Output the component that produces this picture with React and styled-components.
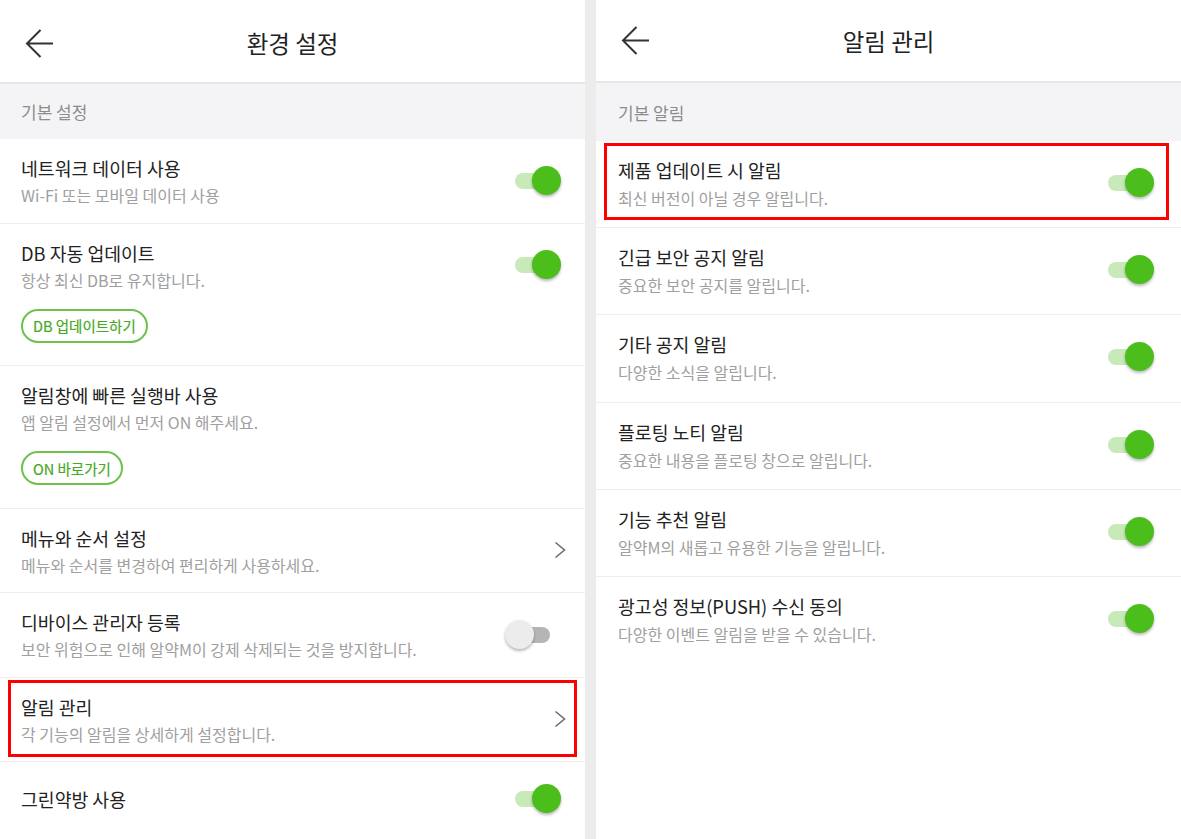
import React from "react";
import styled, { createGlobalStyle, css } from "styled-components";

const GlobalStyle = createGlobalStyle`
  *, *::before, *::after { box-sizing: border-box; }
  html, body { margin: 0; padding: 0; }
  body {
    background: #ececec;
    font-family: "Noto Sans CJK KR", "Noto Sans", sans-serif;
    overflow: hidden;
  }
`;

const Page = styled.div`
  display: flex;
  gap: 11px;
  width: 1181px;
  height: 839px;
  background: #ececec;
`;

const Panel = styled.section`
  width: 585px;
  height: 100%;
  background: #fff;
  display: flex;
  flex-direction: column;
  overflow: hidden;
`;

const Header = styled.header`
  flex: none;
  height: ${(p) => p.$h}px;
  padding-top: ${(p) => p.$pt}px;
  border-bottom: 2px solid #e7e7e7;
  display: grid;
  grid-template-columns: 90px 1fr 90px;
  align-items: center;
`;

const BackButton = styled.button`
  justify-self: start;
  border: 0;
  background: none;
  padding: 0 0 0 25px;
  display: flex;
  align-items: center;
  color: #333;
  cursor: pointer;
`;

const HeaderTitle = styled.h1`
  margin: 0;
  text-align: center;
  font-size: 23.5px;
  font-weight: 400;
  line-height: 30px;
  color: #222;
`;

const SectionLabel = styled.div`
  flex: none;
  height: ${(p) => p.$h}px;
  padding-left: ${(p) => p.$pl}px;
  background: #f4f4f6;
  display: flex;
  align-items: center;
  font-size: 17px;
  color: #8c8c8c;
`;

const Row = styled.div`
  position: relative;
  flex: none;
  display: flex;
  flex-direction: column;
  padding: 16px ${(p) => p.$pr}px ${(p) => p.$pb}px ${(p) => p.$pl}px;
  border-bottom: 1px solid #eeeeee;
  &:last-child {
    border-bottom: 0;
  }
  ${(p) =>
    p.$mark &&
    css`
      &::after {
        content: "";
        position: absolute;
        inset: ${p.$mark};
        border: 3px solid #ff0000;
        pointer-events: none;
      }
    `}
`;

const RowTop = styled.div`
  display: flex;
  align-items: center;
  justify-content: space-between;
  gap: 12px;
  min-height: ${(p) => (p.$single ? 42 : 0)}px;
`;

const Texts = styled.div`
  display: flex;
  flex-direction: column;
  min-width: 0;
`;

const Title = styled.div`
  font-size: 18.3px;
  line-height: 26px;
  color: #222;
`;

const Sub = styled.div`
  margin-top: ${(p) => p.$gap}px;
  font-size: 16px;
  line-height: 22px;
  color: #a0a0a0;
`;

const Pill = styled.button`
  align-self: flex-start;
  margin: 18px 0 6px;
  height: 34px;
  padding: 0 10px;
  border: 2px solid #6cc24a;
  border-radius: 17px;
  background: #fff;
  color: #45a922;
  font-family: inherit;
  font-size: 14.5px;
  font-weight: 400;
  -webkit-text-stroke: 0.2px #45a922;
  cursor: pointer;
`;

const SwitchRoot = styled.span`
  position: relative;
  flex: none;
  display: block;
  width: 56px;
  height: 30px;
`;

const Track = styled.span`
  position: absolute;
  left: 10px;
  top: 7px;
  width: 35px;
  height: 16px;
  border-radius: 8px;
  background: ${(p) => (p.$on ? "#c8e9b8" : "#b5b5b5")};
`;

const Thumb = styled.span`
  position: absolute;
  top: 0;
  left: ${(p) => (p.$on ? 27 : 0)}px;
  width: 29px;
  height: 29px;
  border-radius: 50%;
  background: ${(p) => (p.$on ? "#4cbe1c" : "#ececec")};
  box-shadow: 0 2px 3px rgba(0, 0, 0, 0.28);
`;

const ChevronIcon = styled.svg`
  flex: none;
  display: block;
`;

const Switch = ({ on }) => (
  <SwitchRoot>
    <Track $on={on} />
    <Thumb $on={on} />
  </SwitchRoot>
);

const Chevron = () => (
  <ChevronIcon width="12" height="18" viewBox="0 0 12 18">
    <path d="M1.5 1.5 L10.5 9 L1.5 16.5" fill="none" stroke="#6d6d6d" strokeWidth="1.6" />
  </ChevronIcon>
);

const BackArrow = () => (
  <svg width="29" height="29" viewBox="0 0 29 29">
    <path
      d="M28 14.5 H2 M15.5 1 L2 14.5 L15.5 28"
      fill="none"
      stroke="#333"
      strokeWidth="2"
    />
  </svg>
);

const leftRows = [
  { title: "네트워크 데이터 사용", sub: "Wi-Fi 또는 모바일 데이터 사용", trail: "on" },
  { title: "DB 자동 업데이트", sub: "항상 최신 DB로 유지합니다.", trail: "on", button: "DB 업데이트하기" },
  { title: "알림창에 빠른 실행바 사용", sub: "앱 알림 설정에서 먼저 ON 해주세요.", button: "ON 바로가기" },
  { title: "메뉴와 순서 설정", sub: "메뉴와 순서를 변경하여 편리하게 사용하세요.", trail: "chevron" },
  { title: "디바이스 관리자 등록", sub: "보안 위험으로 인해 알약M이 강제 삭제되는 것을 방지합니다.", trail: "off" },
  { title: "알림 관리", sub: "각 기능의 알림을 상세하게 설정합니다.", trail: "chevron", mark: "2px 8px 4px 8px" },
  { title: "그린약방 사용", trail: "on" },
];

const rightRows = [
  { title: "제품 업데이트 시 알림", sub: "최신 버전이 아닐 경우 알립니다.", trail: "on", mark: "2px 12px 7px 8px" },
  { title: "긴급 보안 공지 알림", sub: "중요한 보안 공지를 알립니다.", trail: "on" },
  { title: "기타 공지 알림", sub: "다양한 소식을 알립니다.", trail: "on" },
  { title: "플로팅 노티 알림", sub: "중요한 내용을 플로팅 창으로 알립니다.", trail: "on" },
  { title: "기능 추천 알림", sub: "알약M의 새롭고 유용한 기능을 알립니다.", trail: "on" },
  { title: "광고성 정보(PUSH) 수신 동의", sub: "다양한 이벤트 알림을 받을 수 있습니다.", trail: "on" },
];

const Trailing = ({ kind }) => {
  if (kind === "chevron") return <Chevron />;
  if (kind === "on") return <Switch on />;
  if (kind === "off") return <Switch on={false} />;
  return null;
};

const SettingRow = ({ row, pl, pr, prChevron, pb, gap }) => (
  <Row
    $pl={pl}
    $pr={row.trail === "chevron" ? prChevron : pr}
    $pb={row.sub ? pb : 16}
    $mark={row.mark}
  >
    <RowTop $single={!row.sub}>
      <Texts>
        <Title>{row.title}</Title>
        {row.sub && <Sub $gap={gap}>{row.sub}</Sub>}
      </Texts>
      <Trailing kind={row.trail} />
    </RowTop>
    {row.button && <Pill>{row.button}</Pill>}
  </Row>
);

export default function App() {
  return (
    <>
      <GlobalStyle />
      <Page>
        <Panel>
          <Header $h={84} $pt={4}>
            <BackButton aria-label="뒤로">
              <BackArrow />
            </BackButton>
            <HeaderTitle>환경 설정</HeaderTitle>
            <span />
          </Header>
          <SectionLabel $h={55} $pl={21}>
            기본 설정
          </SectionLabel>
          {leftRows.map((r) => (
            <SettingRow key={r.title} row={r} pl={21} pr={24} prChevron={19} pb={16.5} gap={3} />
          ))}
        </Panel>
        <Panel>
          <Header $h={83} $pt={0}>
            <BackButton aria-label="뒤로">
              <BackArrow />
            </BackButton>
            <HeaderTitle>알림 관리</HeaderTitle>
            <span />
          </Header>
          <SectionLabel $h={58} $pl={22}>
            기본 알림
          </SectionLabel>
          {rightRows.map((r) => (
            <SettingRow key={r.title} row={r} pl={22} pr={27} prChevron={20} pb={18.2} gap={4} />
          ))}
        </Panel>
      </Page>
    </>
  );
}
